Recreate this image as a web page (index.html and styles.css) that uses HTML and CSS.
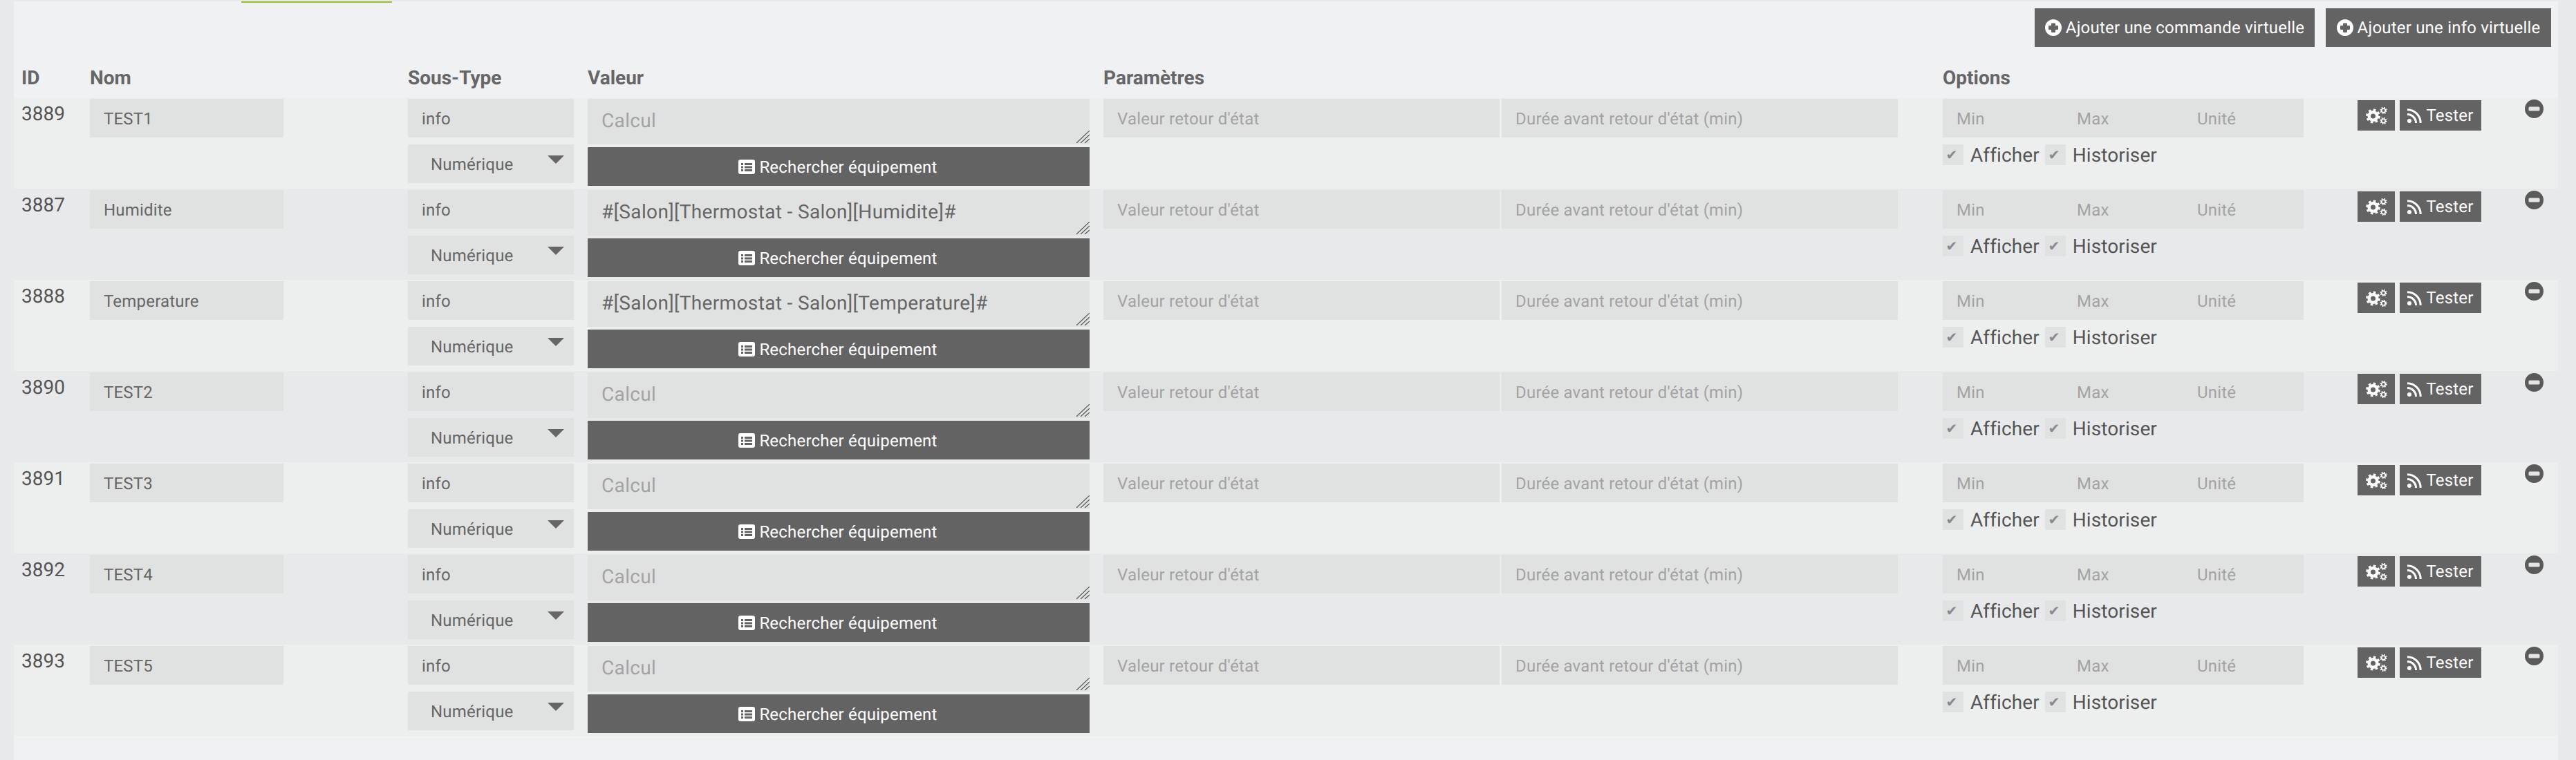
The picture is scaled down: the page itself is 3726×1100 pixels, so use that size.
FILE: index.html
```html
<!DOCTYPE html>
<html lang="fr">
<head>
<meta charset="utf-8">
<title>Commandes</title>
<link rel="stylesheet" href="styles.css">
</head>
<body>
<svg class="defs" width="0" height="0" aria-hidden="true">
  <symbol id="i-plus" viewBox="0 0 24 24"><path fill="#fff" fill-rule="evenodd" d="M12 0a12 12 0 1 1 0 24a12 12 0 1 1 0-24zM10 5.500a1 1 0 0 0-1 1V9H6a1 1 0 0 0-1 1v4a1 1 0 0 0 1 1h3v3a1 1 0 0 0 1 1h4a1 1 0 0 0 1-1v-3h3a1 1 0 0 0 1-1v-4a1 1 0 0 0-1-1h-3V6.500a1 1 0 0 0-1-1z"/></symbol>
  <symbol id="i-list" viewBox="0 0 24 21"><path fill="#fff" fill-rule="evenodd" d="M3 0h18a3 3 0 0 1 3 3v15a3 3 0 0 1-3 3H3a3 3 0 0 1-3-3V3a3 3 0 0 1 3-3zM4 5v3h3V5zm5 0v3h11V5zM4 9.500v3h3v-3zm5 0v3h11v-3zM4 14v3h3v-3zm5 0v3h11v-3z"/></symbol>
  <symbol id="i-cogs" viewBox="0 0 31 25">
    <g fill="none" stroke="#fff">
      <circle cx="10.500" cy="13" r="5.800" stroke-width="4.500"/>
      <circle cx="10.500" cy="13" r="9" stroke-width="2.800" stroke-dasharray="3.600 3.470"/>
      <circle cx="25.500" cy="5" r="2.800" stroke-width="1.800"/>
      <circle cx="25.500" cy="5" r="4.300" stroke-width="1.500" stroke-dasharray="1.700 1.680"/>
      <circle cx="25.500" cy="20" r="2.800" stroke-width="1.800"/>
      <circle cx="25.500" cy="20" r="4.300" stroke-width="1.500" stroke-dasharray="1.700 1.680"/>
    </g>
  </symbol>
  <symbol id="i-rss" viewBox="0 0 21 21">
    <circle cx="3" cy="18" r="3" fill="#fff"/>
    <path fill="none" stroke="#fff" stroke-width="3" d="M0 8.500a12.500 12.500 0 0 1 12.500 12.500M0 1.800a19.200 19.200 0 0 1 19.200 19.200"/>
  </symbol>
  <symbol id="i-minus" viewBox="0 0 27 27"><circle cx="13.500" cy="13.500" r="13.500" fill="#5a5a5a"/><rect x="5.500" y="10.500" width="16" height="6" rx="1.500" fill="#e4e5e5"/></symbol>
  <symbol id="i-grip" viewBox="0 0 20 18"><path fill="none" stroke="#555" stroke-width="1.200" d="M1 18L20 0M7 18L20 6M13 18L20 12"/></symbol>
</svg>
<main class="panel">
  <div class="tab-mark"></div>
  <div class="toolbar">
    <button class="btn btn-top" type="button"><svg class="ic-plus"><use href="#i-plus"/></svg>Ajouter une commande virtuelle</button>
    <button class="btn btn-top" type="button"><svg class="ic-plus"><use href="#i-plus"/></svg>Ajouter une info virtuelle</button>
  </div>
  <div class="grid head">
    <div>ID</div><div>Nom</div><div>Sous-Type</div><div>Valeur</div><div>Paramètres</div><div>Options</div><div></div><div></div>
  </div>

  <div class="grid row">
    <div class="id">3889</div>
    <div><input class="field name" value="TEST1"></div>
    <div class="stack"><input class="field" value="info"><div class="select">Numérique</div></div>
    <div class="stack tight"><div class="ta-wrap"><textarea class="area" placeholder="Calcul"></textarea><svg class="grip"><use href="#i-grip"/></svg></div><button class="btn btn-search" type="button"><svg class="ic-list"><use href="#i-list"/></svg>Rechercher équipement</button></div>
    <div class="params"><input class="field" placeholder="Valeur retour d'état"><input class="field" placeholder="Durée avant retour d'état (min)"></div>
    <div class="stack"><div class="opts"><input class="field" placeholder="Min"><input class="field" placeholder="Max"><input class="field" placeholder="Unité"></div><div class="checks"><span class="cb">✔</span><span class="lbl">Afficher</span><span class="cb">✔</span><span class="lbl">Historiser</span></div></div>
    <div class="acts"><button class="btn btn-cog" type="button"><svg class="ic-cogs"><use href="#i-cogs"/></svg></button><button class="btn btn-test" type="button"><svg class="ic-rss"><use href="#i-rss"/></svg>Tester</button></div>
    <div><svg class="ic-minus"><use href="#i-minus"/></svg></div>
  </div>

  <div class="grid row">
    <div class="id">3887</div>
    <div><input class="field name" value="Humidite"></div>
    <div class="stack"><input class="field" value="info"><div class="select">Numérique</div></div>
    <div class="stack tight"><div class="ta-wrap"><textarea class="area" placeholder="Calcul">#[Salon][Thermostat - Salon][Humidite]#</textarea><svg class="grip"><use href="#i-grip"/></svg></div><button class="btn btn-search" type="button"><svg class="ic-list"><use href="#i-list"/></svg>Rechercher équipement</button></div>
    <div class="params"><input class="field" placeholder="Valeur retour d'état"><input class="field" placeholder="Durée avant retour d'état (min)"></div>
    <div class="stack"><div class="opts"><input class="field" placeholder="Min"><input class="field" placeholder="Max"><input class="field" placeholder="Unité"></div><div class="checks"><span class="cb">✔</span><span class="lbl">Afficher</span><span class="cb">✔</span><span class="lbl">Historiser</span></div></div>
    <div class="acts"><button class="btn btn-cog" type="button"><svg class="ic-cogs"><use href="#i-cogs"/></svg></button><button class="btn btn-test" type="button"><svg class="ic-rss"><use href="#i-rss"/></svg>Tester</button></div>
    <div><svg class="ic-minus"><use href="#i-minus"/></svg></div>
  </div>

  <div class="grid row">
    <div class="id">3888</div>
    <div><input class="field name" value="Temperature"></div>
    <div class="stack"><input class="field" value="info"><div class="select">Numérique</div></div>
    <div class="stack tight"><div class="ta-wrap"><textarea class="area" placeholder="Calcul">#[Salon][Thermostat - Salon][Temperature]#</textarea><svg class="grip"><use href="#i-grip"/></svg></div><button class="btn btn-search" type="button"><svg class="ic-list"><use href="#i-list"/></svg>Rechercher équipement</button></div>
    <div class="params"><input class="field" placeholder="Valeur retour d'état"><input class="field" placeholder="Durée avant retour d'état (min)"></div>
    <div class="stack"><div class="opts"><input class="field" placeholder="Min"><input class="field" placeholder="Max"><input class="field" placeholder="Unité"></div><div class="checks"><span class="cb">✔</span><span class="lbl">Afficher</span><span class="cb">✔</span><span class="lbl">Historiser</span></div></div>
    <div class="acts"><button class="btn btn-cog" type="button"><svg class="ic-cogs"><use href="#i-cogs"/></svg></button><button class="btn btn-test" type="button"><svg class="ic-rss"><use href="#i-rss"/></svg>Tester</button></div>
    <div><svg class="ic-minus"><use href="#i-minus"/></svg></div>
  </div>

  <div class="grid row">
    <div class="id">3890</div>
    <div><input class="field name" value="TEST2"></div>
    <div class="stack"><input class="field" value="info"><div class="select">Numérique</div></div>
    <div class="stack tight"><div class="ta-wrap"><textarea class="area" placeholder="Calcul"></textarea><svg class="grip"><use href="#i-grip"/></svg></div><button class="btn btn-search" type="button"><svg class="ic-list"><use href="#i-list"/></svg>Rechercher équipement</button></div>
    <div class="params"><input class="field" placeholder="Valeur retour d'état"><input class="field" placeholder="Durée avant retour d'état (min)"></div>
    <div class="stack"><div class="opts"><input class="field" placeholder="Min"><input class="field" placeholder="Max"><input class="field" placeholder="Unité"></div><div class="checks"><span class="cb">✔</span><span class="lbl">Afficher</span><span class="cb">✔</span><span class="lbl">Historiser</span></div></div>
    <div class="acts"><button class="btn btn-cog" type="button"><svg class="ic-cogs"><use href="#i-cogs"/></svg></button><button class="btn btn-test" type="button"><svg class="ic-rss"><use href="#i-rss"/></svg>Tester</button></div>
    <div><svg class="ic-minus"><use href="#i-minus"/></svg></div>
  </div>

  <div class="grid row">
    <div class="id">3891</div>
    <div><input class="field name" value="TEST3"></div>
    <div class="stack"><input class="field" value="info"><div class="select">Numérique</div></div>
    <div class="stack tight"><div class="ta-wrap"><textarea class="area" placeholder="Calcul"></textarea><svg class="grip"><use href="#i-grip"/></svg></div><button class="btn btn-search" type="button"><svg class="ic-list"><use href="#i-list"/></svg>Rechercher équipement</button></div>
    <div class="params"><input class="field" placeholder="Valeur retour d'état"><input class="field" placeholder="Durée avant retour d'état (min)"></div>
    <div class="stack"><div class="opts"><input class="field" placeholder="Min"><input class="field" placeholder="Max"><input class="field" placeholder="Unité"></div><div class="checks"><span class="cb">✔</span><span class="lbl">Afficher</span><span class="cb">✔</span><span class="lbl">Historiser</span></div></div>
    <div class="acts"><button class="btn btn-cog" type="button"><svg class="ic-cogs"><use href="#i-cogs"/></svg></button><button class="btn btn-test" type="button"><svg class="ic-rss"><use href="#i-rss"/></svg>Tester</button></div>
    <div><svg class="ic-minus"><use href="#i-minus"/></svg></div>
  </div>

  <div class="grid row">
    <div class="id">3892</div>
    <div><input class="field name" value="TEST4"></div>
    <div class="stack"><input class="field" value="info"><div class="select">Numérique</div></div>
    <div class="stack tight"><div class="ta-wrap"><textarea class="area" placeholder="Calcul"></textarea><svg class="grip"><use href="#i-grip"/></svg></div><button class="btn btn-search" type="button"><svg class="ic-list"><use href="#i-list"/></svg>Rechercher équipement</button></div>
    <div class="params"><input class="field" placeholder="Valeur retour d'état"><input class="field" placeholder="Durée avant retour d'état (min)"></div>
    <div class="stack"><div class="opts"><input class="field" placeholder="Min"><input class="field" placeholder="Max"><input class="field" placeholder="Unité"></div><div class="checks"><span class="cb">✔</span><span class="lbl">Afficher</span><span class="cb">✔</span><span class="lbl">Historiser</span></div></div>
    <div class="acts"><button class="btn btn-cog" type="button"><svg class="ic-cogs"><use href="#i-cogs"/></svg></button><button class="btn btn-test" type="button"><svg class="ic-rss"><use href="#i-rss"/></svg>Tester</button></div>
    <div><svg class="ic-minus"><use href="#i-minus"/></svg></div>
  </div>

  <div class="grid row">
    <div class="id">3893</div>
    <div><input class="field name" value="TEST5"></div>
    <div class="stack"><input class="field" value="info"><div class="select">Numérique</div></div>
    <div class="stack tight"><div class="ta-wrap"><textarea class="area" placeholder="Calcul"></textarea><svg class="grip"><use href="#i-grip"/></svg></div><button class="btn btn-search" type="button"><svg class="ic-list"><use href="#i-list"/></svg>Rechercher équipement</button></div>
    <div class="params"><input class="field" placeholder="Valeur retour d'état"><input class="field" placeholder="Durée avant retour d'état (min)"></div>
    <div class="stack"><div class="opts"><input class="field" placeholder="Min"><input class="field" placeholder="Max"><input class="field" placeholder="Unité"></div><div class="checks"><span class="cb">✔</span><span class="lbl">Afficher</span><span class="cb">✔</span><span class="lbl">Historiser</span></div></div>
    <div class="acts"><button class="btn btn-cog" type="button"><svg class="ic-cogs"><use href="#i-cogs"/></svg></button><button class="btn btn-test" type="button"><svg class="ic-rss"><use href="#i-rss"/></svg>Tester</button></div>
    <div><svg class="ic-minus"><use href="#i-minus"/></svg></div>
  </div>
</main>
</body>
</html>
```

FILE: styles.css
```css
* { box-sizing: border-box; }
html, body { margin: 0; height: 100%; }
body {
  background: #e8e9eb;
  font-family: Roboto, "Liberation Sans", sans-serif;
  color: #555;
  padding: 2px 26px 0 20px;
  overflow: hidden;
  text-rendering: geometricPrecision;
}
input, textarea, button { text-rendering: geometricPrecision; }
.defs { position: absolute; }
.panel { background: #f0f1f3; height: 1098px; }
.tab-mark { width: 218px; height: 2px; margin-left: 329px; background: #94c11f; }
.toolbar { display: flex; justify-content: flex-end; gap: 16px; padding: 8px 10px 0 0; }
.btn {
  display: flex; align-items: center; justify-content: center;
  border: 0; margin: 0; padding: 0; border-radius: 0;
  background: #636363; color: #fff;
  font-family: inherit; font-size: 24px; font-weight: 400; letter-spacing: .2px;
}
.btn-top { width: 405px; height: 56px; }
.btn-top + .btn-top { width: 326px; }
.ic-plus { width: 24px; height: 24px; margin-right: 6px; }
.grid {
  display: grid;
  grid-template-columns: 99px 460px 260px 746px 1214px 600px 242px 48px;
  padding-left: 11px;
}
.head {
  height: 73px; align-items: start; padding-top: 28px;
  font-size: 28px; font-weight: 700; line-height: 34px; color: #666;
}
.row { height: 132px; padding-top: 2px; background: #edefee; }
.row:nth-child(odd) { background: #e8e9eb; }
.id { font-size: 28px; line-height: 34px; padding-top: 5px; color: #555; }
.field, .area, .select {
  display: block; border: 0; border-radius: 0; margin: 0;
  background: #e0e2e1; color: #666; outline: 0;
  font-family: inherit; font-size: 24px; letter-spacing: .2px;
}
.field { height: 56px; width: 240px; padding: 2px 20px 0; }
.field.name { width: 280px; }
.field::placeholder { color: #a3a3a3; opacity: 1; }
.stack { display: flex; flex-direction: column; gap: 10px; }
.stack.tight { gap: 4px; }
.select {
  position: relative; width: 240px; height: 56px;
  padding-left: 33px; line-height: 58px; color: #666;
}
.select::after {
  content: ""; position: absolute; right: 14px; top: 16px;
  border-style: solid; border-width: 12px 12px 0; border-color: #666 transparent transparent;
}
.ta-wrap { position: relative; height: 66px; width: 726px; }
.area {
  width: 100%; height: 100%; resize: none; overflow: hidden;
  padding: 15px 20px 0; font-size: 28px; line-height: 34px; letter-spacing: .35px; color: #666;
}
.area::placeholder { color: #a3a3a3; opacity: 1; }
.grip { position: absolute; right: 0; bottom: 2px; width: 20px; height: 18px; }
.btn-search { width: 726px; height: 56px; padding-top: 2px; }
.ic-list { width: 24px; height: 21px; margin: -2px 6px 0 -2px; }
.params { display: flex; gap: 3px; }
.params .field { width: 573px; }
.opts { display: flex; }
.opts .field { width: 174px; }
.checks { display: flex; align-items: center; height: 30px; }
.cb {
  display: flex; align-items: center; justify-content: center;
  width: 30px; height: 30px; padding-right: 4px; background: #e0e2e1; color: #888a90;
  font-family: "DejaVu Sans", sans-serif; font-size: 20px;
}
.lbl { font-size: 28px; letter-spacing: .1px; margin: 0 8px 0 10px; color: #555; }
.acts { display: flex; gap: 7px; padding-top: 2px; }
.btn-cog { width: 54px; height: 44px; }
.ic-cogs { width: 31px; height: 25px; }
.btn-test { width: 118px; height: 44px; }
.ic-rss { width: 21px; height: 21px; margin-right: 6px; }
.ic-minus { display: block; width: 27px; height: 27px; margin-top: 1px; }
```
